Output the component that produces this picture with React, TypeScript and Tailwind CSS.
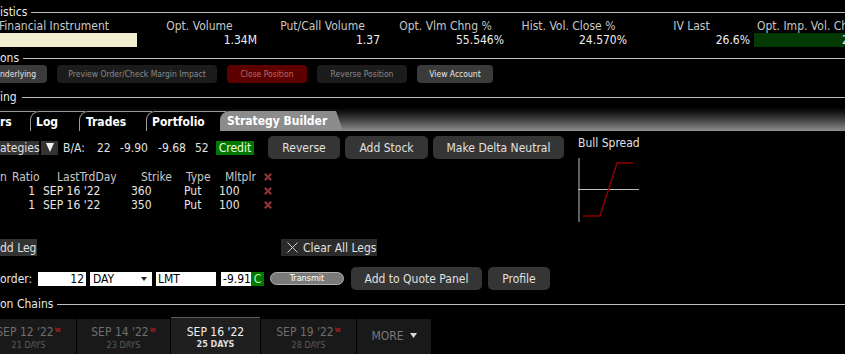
import React from "react";

const RedX = () => (
  <svg width="8" height="8" viewBox="0 0 8 8" className="block">
    <line x1="0.8" y1="0.8" x2="7.2" y2="7.2" stroke="#8e3434" strokeWidth="2.2" />
    <line x1="7.2" y1="0.8" x2="0.8" y2="7.2" stroke="#8e3434" strokeWidth="2.2" />
  </svg>
);

const W = () => <span className="text-[6px] text-[#a42020] font-bold ml-[1px] relative -top-[4px]">W</span>;

export default function App() {
  return (
    <div className="w-[845px] h-[354px] bg-black overflow-hidden text-[#e0e0e0] font-['DejaVu_Sans_Condensed','DejaVu_Sans',sans-serif] font-stretch-condensed text-[12px] leading-none">
      {/* Statistics heading */}
      <div className="mt-[5px] flex items-center h-[14px]">
        <span className="text-[#e6e6e6]">istics</span>
        <div className="ml-[4px] flex-1 h-px bg-[#bdbdbd]" />
      </div>
      {/* labels */}
      <div className="flex items-center h-[14px] text-[#c8c8c8] whitespace-nowrap">
        <div className="w-[138px] shrink-0"><span className="-ml-[1px]">Financial Instrument</span></div>
        <div className="w-[123px] shrink-0 text-center">Opt. Volume</div>
        <div className="w-[123px] shrink-0 text-center">Put/Call Volume</div>
        <div className="w-[123px] shrink-0 text-center">Opt. Vlm Chng %</div>
        <div className="w-[123px] shrink-0 text-center">Hist. Vol. Close %</div>
        <div className="w-[123px] shrink-0 text-center">IV Last</div>
        <div className="w-[123px] shrink-0 pl-[4px]">Opt. Imp. Vol. Change %</div>
      </div>
      {/* values */}
      <div className="flex items-center h-[14px] text-[#eeeeee] whitespace-nowrap">
        <div className="w-[138px] shrink-0 h-[14px]"><div className="w-[137px] h-[14px] bg-[#efefd0]" /></div>
        <div className="w-[123px] shrink-0 text-right pr-[4px]">1.34M</div>
        <div className="w-[123px] shrink-0 text-right pr-[4px]">1.37</div>
        <div className="w-[123px] shrink-0 text-right pr-[3px]">55.546%</div>
        <div className="w-[123px] shrink-0 text-right pr-[3px]">24.570%</div>
        <div className="w-[123px] shrink-0 text-right pr-[3px]">26.6%</div>
        <div className="w-[123px] shrink-0 pl-px">
          <div className="h-[14px] bg-[#033a03] flex items-center pl-[88px]">25.3%</div>
        </div>
      </div>
      {/* Actions heading */}
      <div className="mt-[4px] flex items-center h-[14px]">
        <span className="text-[#e6e6e6]">ons</span>
        <div className="ml-[4px] flex-1 h-px bg-[#bdbdbd]" />
      </div>
      {/* action buttons */}
      <div className="flex items-center h-[18px] text-[8.5px] whitespace-nowrap">
        <div className="-ml-[4px] w-[51px] h-[18px] rounded-[4px] bg-[#3b3b3b] text-[#e6e6e6] flex items-center pl-[4px]">nderlying</div>
        <div className="ml-[10px] w-[160px] h-[18px] rounded-[4px] bg-[#1c1c1c] text-[#8a8a8a] flex items-center justify-center">Preview Order/Check Margin Impact</div>
        <div className="ml-[10px] w-[80px] h-[18px] rounded-[4px] bg-[#5e0000] text-[#b86e6e] flex items-center justify-center">Close Position</div>
        <div className="ml-[10px] w-[90px] h-[18px] rounded-[4px] bg-[#1c1c1c] text-[#8a8a8a] flex items-center justify-center">Reverse Position</div>
        <div className="ml-[10px] w-[76px] h-[18px] rounded-[4px] bg-[#3b3b3b] text-[#eaeaea] flex items-center justify-center">View Account</div>
      </div>
      {/* Trading heading */}
      <div className="mt-[7px] flex items-center h-[14px]">
        <span className="text-[#e6e6e6]">ing</span>
        <div className="ml-[5px] flex-1 h-px bg-[#bdbdbd]" />
      </div>
      {/* tab bar */}
      <div className="h-[27px] bg-linear-to-b from-black to-[#8e8e8e] flex items-end font-bold text-white whitespace-nowrap">
        <div className="w-[36px] h-[20px] bg-black border-t border-[#9a9a9a] flex items-center">rs</div>
        <div className="-ml-[6px] w-[55px] h-[20px] bg-black border-t border-l border-[#9a9a9a] rounded-tl-[9px] flex items-center pl-[5px]">Log</div>
        <div className="-ml-[6px] w-[73px] h-[20px] bg-black border-t border-l border-[#9a9a9a] rounded-tl-[9px] flex items-center pl-[6px]">Trades</div>
        <div className="-ml-[6px] w-[80px] h-[20px] bg-black border-t border-l border-[#9a9a9a] rounded-tl-[9px] flex items-center pl-[5px]">Portfolio</div>
        <div className="-ml-[6px] w-[123px] h-[20px] bg-[#8c8c8c] rounded-tl-[9px] flex items-center pl-[7px] [clip-path:polygon(0_0,calc(100%_-_7px)_0,100%_100%,0_100%)]">Strategy Builder</div>
      </div>
      {/* strategy builder body */}
      <div className="pt-[5px] h-[108px] flex">
        <div className="w-[564px] shrink-0">
          <div className="h-[23px] flex items-center whitespace-nowrap">
            <div className="w-[39px] h-[14px] bg-[#333333] flex items-center">ategies</div>
            <div className="ml-[2px] w-[17px] h-[14px] bg-[#333333] flex items-center justify-center">
              <svg width="8" height="9" viewBox="0 0 8 9"><polygon points="0,0 8,0 4,9" fill="#f2f2f2" /></svg>
            </div>
            <span className="ml-[5px] w-[34px]">B/A:</span>
            <span className="w-[23px]">22</span>
            <span className="w-[38px]">-9.90</span>
            <span className="w-[37px]">-9.68</span>
            <span className="w-[21px]">52</span>
            <div className="w-[38px] h-[14px] bg-[#007800] text-[#e8ffe8] flex items-center justify-center">Credit</div>
            <div className="ml-[14px] w-[72px] h-[23px] rounded-[5px] bg-[#353535] flex items-center justify-center">Reverse</div>
            <div className="ml-[5px] w-[83px] h-[23px] rounded-[5px] bg-[#353535] flex items-center justify-center">Add Stock</div>
            <div className="ml-[5px] w-[131px] h-[23px] rounded-[5px] bg-[#353535] flex items-center justify-center">Make Delta Neutral</div>
          </div>
          <div className="mt-[11px] h-[14px] flex items-center text-[#c8c8c8] whitespace-nowrap">
            <span className="w-[12px]">n</span>
            <span className="w-[45px]">Ratio</span>
            <span className="w-[84px]">LastTrdDay</span>
            <span className="w-[45px]">Strike</span>
            <span className="w-[39px]">Type</span>
            <span className="w-[39px]">Mltplr</span>
            <RedX />
          </div>
          {["360", "350"].map((s) => (
            <div key={s} className="h-[14px] flex items-center text-[#e6e6e6] whitespace-nowrap">
              <span className="w-[36px] text-right pr-px">1</span>
              <span className="ml-[7px] w-[88px]">SEP 16 '22</span>
              <span className="w-[53px]">{s}</span>
              <span className="w-[35px]">Put</span>
              <span className="w-[45px]">100</span>
              <RedX />
            </div>
          ))}
        </div>
        <div className="ml-[14px] flex flex-col">
          <div className="h-[14px] flex items-center whitespace-nowrap">Bull Spread</div>
          <svg width="62" height="64" viewBox="0 0 62 64" className="mt-[8px] block">
            <line x1="1" y1="0" x2="1" y2="64" stroke="#bdbdbd" strokeWidth="1" />
            <line x1="0" y1="31.5" x2="61" y2="31.5" stroke="#bdbdbd" strokeWidth="1" />
            <polyline points="5,58 22,58 39,5 55,5" fill="none" stroke="#8c0000" strokeWidth="1.5" />
          </svg>
        </div>
      </div>
      {/* add leg row */}
      <div className="h-[17px] flex items-center whitespace-nowrap">
        <div className="w-[37px] h-[17px] bg-[#333333] flex items-center">dd Leg</div>
        <div className="ml-[244px] w-[96px] h-[17px] bg-[#2b2b2b] flex items-center pl-[6px]">
          <svg width="11" height="11" viewBox="0 0 11 11" className="block">
            <line x1="0.5" y1="0.5" x2="10.5" y2="10.5" stroke="#d0d0d0" strokeWidth="1" />
            <line x1="10.5" y1="0.5" x2="0.5" y2="10.5" stroke="#d0d0d0" strokeWidth="1" />
          </svg>
          <span className="ml-[5px]">Clear All Legs</span>
        </div>
      </div>
      {/* order row */}
      <div className="mt-[11px] h-[23px] flex items-center whitespace-nowrap">
        <span className="w-[38px] text-[#e6e6e6]">order:</span>
        <div className="w-[48px] h-[14px] bg-white text-black flex items-center justify-end pr-[2px]">12</div>
        <div className="ml-[4px] w-[62px] h-[14px] bg-white text-black flex items-center justify-between pl-[3px] pr-[5px]">
          <span>DAY</span>
          <svg width="6" height="4" viewBox="0 0 6 4"><polygon points="0,0 6,0 3,4" fill="#222" /></svg>
        </div>
        <div className="ml-[4px] w-[60px] h-[14px] bg-white text-black flex items-center pl-[2px]">LMT</div>
        <div className="ml-[5px] w-[30px] h-[14px] bg-white text-black flex items-center justify-end">-9.91</div>
        <div className="w-[13px] h-[14px] bg-[#007800] text-[#b8f5b8] flex items-center justify-center">C</div>
        <div className="ml-[6px] w-[74px] h-[13px] rounded-full bg-[#7a7a7a] border border-[#b0b0b0] text-white text-[9px] flex items-center justify-center">Transmit</div>
        <div className="ml-[7px] w-[131px] h-[23px] rounded-[5px] bg-[#353535] flex items-center justify-center">Add to Quote Panel</div>
        <div className="ml-[6px] w-[62px] h-[23px] rounded-[5px] bg-[#353535] flex items-center justify-center">Profile</div>
      </div>
      {/* option chains heading */}
      <div className="mt-[7px] flex items-center h-[14px]">
        <span className="text-[#e6e6e6]">on Chains</span>
        <div className="ml-[4px] flex-1 h-px bg-[#bdbdbd]" />
      </div>
      {/* expiry tabs */}
      <div className="mt-[6px] h-[37px] flex items-end gap-px whitespace-nowrap text-center">
        <div className="-ml-[19px] w-[95px] h-[35px] bg-[#191919] flex flex-col items-center pt-[7px]">
          <div className="leading-[13px] text-[#6e6e6e]">SEP 12 '22<W /></div>
          <div className="leading-[10px] text-[9px] text-[#5a5a5a]">21 DAYS</div>
        </div>
        <div className="w-[93px] h-[35px] bg-[#191919] flex flex-col items-center pt-[7px]">
          <div className="leading-[13px] text-[#6e6e6e]">SEP 14 '22<W /></div>
          <div className="leading-[10px] text-[9px] text-[#5a5a5a]">23 DAYS</div>
        </div>
        <div className="w-[89px] h-[37px] bg-[#1f1f1f] border-t border-[#5c5c5c] flex flex-col items-center pt-[8px]">
          <div className="leading-[13px] text-[#f0f0f0]">SEP 16 '22</div>
          <div className="leading-[10px] text-[9px] text-[#dcdcdc] font-bold">25 DAYS</div>
        </div>
        <div className="w-[95px] h-[35px] bg-[#191919] flex flex-col items-center pt-[7px]">
          <div className="leading-[13px] text-[#6e6e6e]">SEP 19 '22<W /></div>
          <div className="leading-[10px] text-[9px] text-[#5a5a5a]">28 DAYS</div>
        </div>
        <div className="w-[74px] h-[35px] bg-[#191919] flex items-center justify-center pb-[2px] text-[#7a7a7a]">
          <span>MORE</span>
          <svg width="7" height="5" viewBox="0 0 7 5" className="ml-[6px]"><polygon points="0,0 7,0 3.5,5" fill="#d8d8d8" /></svg>
        </div>
      </div>
    </div>
  );
}
